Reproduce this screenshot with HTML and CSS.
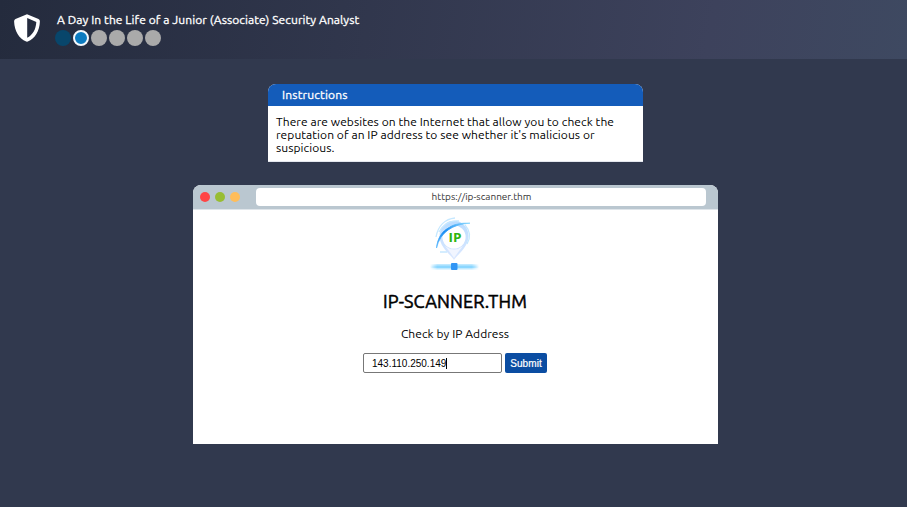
FILE: index.html
```html
<!DOCTYPE html>
<html lang="en">
<head>
<meta charset="utf-8">
<title>IP Scanner</title>
<link rel="stylesheet" href="styles.css">
</head>
<body>
<header class="topbar">
  <svg class="shield" width="26" height="28" viewBox="0 0 26 28">
    <path fill="#fff" fill-rule="evenodd" d="M13 0.3 L24.5 5 Q26 5.700 25.900 7.400 C25.500 17 21 24.500 13.800 27.500 Q13 27.800 12.200 27.500 C5 24.500 .5 17 .1 7.400 Q0 5.700 1.500 5Z M13.200 4 V23.700 C18.500 21 21.900 15.500 22.300 7.900Z"/>
  </svg>
  <div class="heading">
    <h1 class="title"><span>A Day In the Life of a Junior (Associate) Security Analyst</span></h1>
    <div class="steps">
      <i class="step done"></i><i class="step current"></i><i class="step"></i><i class="step"></i><i class="step"></i><i class="step"></i>
    </div>
  </div>
</header>
<main class="stage">
  <section class="instructions">
    <h2 class="instructions-title">Instructions</h2>
    <p class="instructions-text">There are websites on the Internet that allow you to check the<br>reputation of an IP address to see whether it's malicious or<br>suspicious.</p>
  </section>
  <section class="browser">
    <div class="chrome">
      <i class="dot red"></i><i class="dot green"></i><i class="dot orange"></i>
      <div class="url"><span>https://ip-scanner.thm</span></div>
    </div>
    <div class="page">
      <svg class="logo" width="50" height="56" viewBox="0 0 50 56">
        <defs>
          <linearGradient id="pin" x1="0" y1="0" x2="0" y2="1"><stop offset="0" stop-color="#b9dcff"/><stop offset="1" stop-color="#dce8ff"/></linearGradient>
          <linearGradient id="arc" x1="0" y1="1" x2="1" y2="0"><stop offset="0" stop-color="#62bdff"/><stop offset=".45" stop-color="#168bf2"/><stop offset="1" stop-color="#8bd9ff"/></linearGradient>
          <linearGradient id="bar"><stop offset="0" stop-color="#9bdcff" stop-opacity="0"/><stop offset=".15" stop-color="#8cd7ff"/><stop offset=".85" stop-color="#8cd7ff"/><stop offset="1" stop-color="#9bdcff" stop-opacity="0"/></linearGradient>
        </defs>
        <path d="M24 44 C20 38 9.500 31 9.500 20 A14.300 15 0 0 1 38.500 20 C38.500 31 28 38 24 44Z" fill="url(#pin)"/>
        <circle cx="24" cy="21" r="11.600" fill="#fff"/>
        <path d="M15 30 Q24 37 33 30 Q28 36 24 42 Q20 36 15 30Z" fill="#f1f5ff"/>
        <path d="M6 21 C8 10 15 3 25 2 M9 16 C14 7 20 4 29 5 M35 9 Q43 18 37 28 M10 36 H17" fill="none" stroke="#c6e8ff" stroke-width="1.300"/>
        <path d="M6.500 32 C8 16 20 6 40 7.200 C23 8 10 16 6.500 32Z" fill="url(#arc)" stroke="url(#arc)" stroke-width=".8"/>
        <text class="logo-text" x="18.500" y="26" textLength="13" lengthAdjust="spacingAndGlyphs">IP</text>
        <rect y="48" width="49" height="5.500" fill="url(#bar)" opacity=".55"/>
        <rect y="49.500" width="49" height="2.500" fill="url(#bar)"/>
        <rect x="21" y="47" width="6.500" height="7" rx="1" fill="#3195f4"/>
      </svg>
      <h2 class="site"><span>IP-SCANNER.THM</span></h2>
      <p class="label"><span>Check by IP Address</span></p>
      <form class="form">
        <div class="field"><span>143.110.250.149</span><i class="caret"></i></div>
        <button class="submit" type="button">Submit</button>
      </form>
    </div>
  </section>
</main>
</body>
</html>
```

FILE: styles.css
```css
* { box-sizing: border-box; }
body { margin: 0; height: 507px; overflow: hidden; background: #31394e; font-family: Ubuntu, "Noto Sans", sans-serif; color: #000; }
h1, h2, p { margin: 0; font-weight: 400; white-space: nowrap; }
.topbar { height: 59px; display: flex; padding: 14px 0 0 14px; background: linear-gradient(100deg, #242b3d 0%, #3d425c 78%, #3e4961 100%); }
.heading { margin-left: 14.500px; margin-top: -1px; }
.title { font-size: 12px; line-height: 14px; color: #fff; padding-left: 2.500px; letter-spacing: .08px; -webkit-text-stroke: .3px #fff; }
.steps { display: flex; gap: 2px; margin-top: 2.500px; }
.step { width: 16px; height: 16px; border-radius: 50%; background: #aaa; }
.step.done { background: #08466b; }
.step.current { background: #0c7bc0; border: 2px solid #f4f8fc; }
.stage { display: flex; flex-direction: column; align-items: center; padding: 25px 0 0 4px; }
.instructions { width: 375px; height: 78px; background: #fff; border-radius: 8px 8px 0 0; border-bottom: 1px solid #e4e7ee; overflow: hidden; }
.instructions-title { height: 22px; line-height: 22px; padding-left: 14px; background: #145cba; color: #fff; font-size: 12px; letter-spacing: .18px; -webkit-text-stroke: .3px #fff; }
.instructions-text { padding: 9px 8px 0; font-size: 12px; line-height: 13px; letter-spacing: .065px; }
.browser { width: 525px; height: 259px; margin-top: 23px; background: #fff; border-radius: 8px 8px 0 0; overflow: hidden; }
.chrome { height: 25px; display: flex; align-items: center; background: #bac7d0; border-bottom: 1px solid #dfe5ea; padding-left: 7px; }
.dot { width: 10px; height: 10px; border-radius: 50%; margin-right: 5px; }
.red { background: #ff4545; }
.green { background: #98bd32; }
.orange { background: #ffbd5a; }
.url { width: 450px; height: 18px; margin-left: 11px; border-radius: 4px; background: #fff; text-align: center; font-size: 10px; line-height: 18px; color: #333; padding-left: 1px; }
.page { display: flex; flex-direction: column; align-items: center; padding: 6px 1px 0 0; }
.logo { display: block; }
.logo-text { font: 700 11.500px "Open Sans", sans-serif; fill: #2fb510; }
.site { font-size: 18px; line-height: 24px; margin-top: 17px; letter-spacing: .14px; -webkit-text-stroke: .5px #000; }
.label { font-size: 12px; line-height: 16px; margin-top: 13px; letter-spacing: .05px; }
.form { display: flex; gap: 3px; margin-top: 11px; }
.field { width: 139px; height: 20px; display: flex; align-items: center; padding-left: 8px; border: 1px solid #777; border-radius: 2px; font: 10px "Liberation Sans", sans-serif; }
.caret { width: 1px; height: 11px; background: #000; }
.submit { width: 42px; height: 20px; padding: 0; border: 0; border-radius: 2px; background: #0b4da2; color: #fff; font: 10px "Liberation Sans", sans-serif; letter-spacing: .1px; -webkit-text-stroke: .2px #fff; }
```
